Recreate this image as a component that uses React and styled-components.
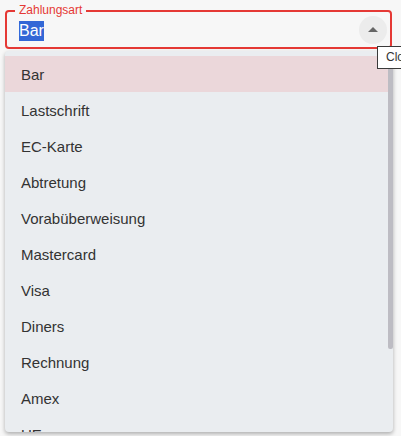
import React from 'react'
import styled, { createGlobalStyle } from 'styled-components'

const GlobalStyle = createGlobalStyle`
  html, body {
    margin: 0;
    padding: 0;
    background: #f7f7f7;
    overflow: hidden;
  }
  body {
    font-family: "Liberation Sans", Arial, sans-serif;
  }
`

const Page = styled.div`
  width: 401px;
  height: 436px;
  padding: 10px 0 0 5px;
  box-sizing: border-box;
  position: relative;
`

const Field = styled.div`
  position: relative;
  width: 387px;
  height: 39px;
  box-sizing: border-box;
  border: 2px solid #e53935;
  border-radius: 4px;
  display: flex;
  align-items: center;
  justify-content: space-between;
  padding: 0 3px 0 12px;
`

const Label = styled.span`
  position: absolute;
  left: 8px;
  top: -9px;
  padding: 0 4px;
  background: #f7f7f7;
  color: #e53935;
  font-size: 12px;
  line-height: 14px;
`

const Value = styled.span`
  font-size: 16px;
  line-height: 20px;
  margin-top: 3px;
  color: #fff;
  background: #3367d6;
`

const ToggleButton = styled.div`
  width: 28px;
  height: 28px;
  border-radius: 50%;
  background: #ececec;
  display: flex;
  align-items: center;
  justify-content: center;
`

const Tooltip = styled.div`
  position: absolute;
  left: 377px;
  top: 46px;
  z-index: 10;
  background: #fff;
  border: 1px solid #3a3a3a;
  padding: 3px 7px 4px 8px;
  font-size: 12px;
  line-height: 14px;
  color: #333;
  white-space: nowrap;
`

const Menu = styled.div`
  position: relative;
  margin-top: 2px;
  width: 388px;
  height: 381px;
  background: #eaedf0;
  border-radius: 4px;
  box-shadow: 0 2px 4px rgba(0, 0, 0, 0.3);
  overflow: hidden;
`

const List = styled.ul`
  list-style: none;
  margin: 0;
  padding: 5px 5px 6px 0;
`

const ScrollThumb = styled.div`
  position: absolute;
  right: 0;
  top: 0;
  width: 5px;
  height: 298px;
  background: #bdbcc3;
  border-radius: 0 0 2px 2px;
`

const Item = styled.li`
  height: 36px;
  display: flex;
  align-items: center;
  padding-left: 16px;
  font-size: 15px;
  color: #333;
  background: ${p => (p.$active ? '#ebd7da' : 'transparent')};
`

const options = [
  'Bar',
  'Lastschrift',
  'EC-Karte',
  'Abtretung',
  'Vorabüberweisung',
  'Mastercard',
  'Visa',
  'Diners',
  'Rechnung',
  'Amex',
  'UE',
  'Paypal',
  'Sonstiges',
]

export default function App() {
  return (
    <>
      <GlobalStyle />
      <Page>
        <Field>
          <Label>Zahlungsart</Label>
          <Value>Bar</Value>
          <ToggleButton>
            <svg width="10" height="5" viewBox="0 0 10 5">
              <path d="M0 5 L5 0 L10 5 Z" fill="#666" />
            </svg>
          </ToggleButton>
        </Field>
        <Tooltip>Close</Tooltip>
        <Menu>
          <List>
            {options.map(o => (
              <Item key={o} $active={o === 'Bar'}>
                {o}
              </Item>
            ))}
          </List>
          <ScrollThumb />
        </Menu>
      </Page>
    </>
  )
}
